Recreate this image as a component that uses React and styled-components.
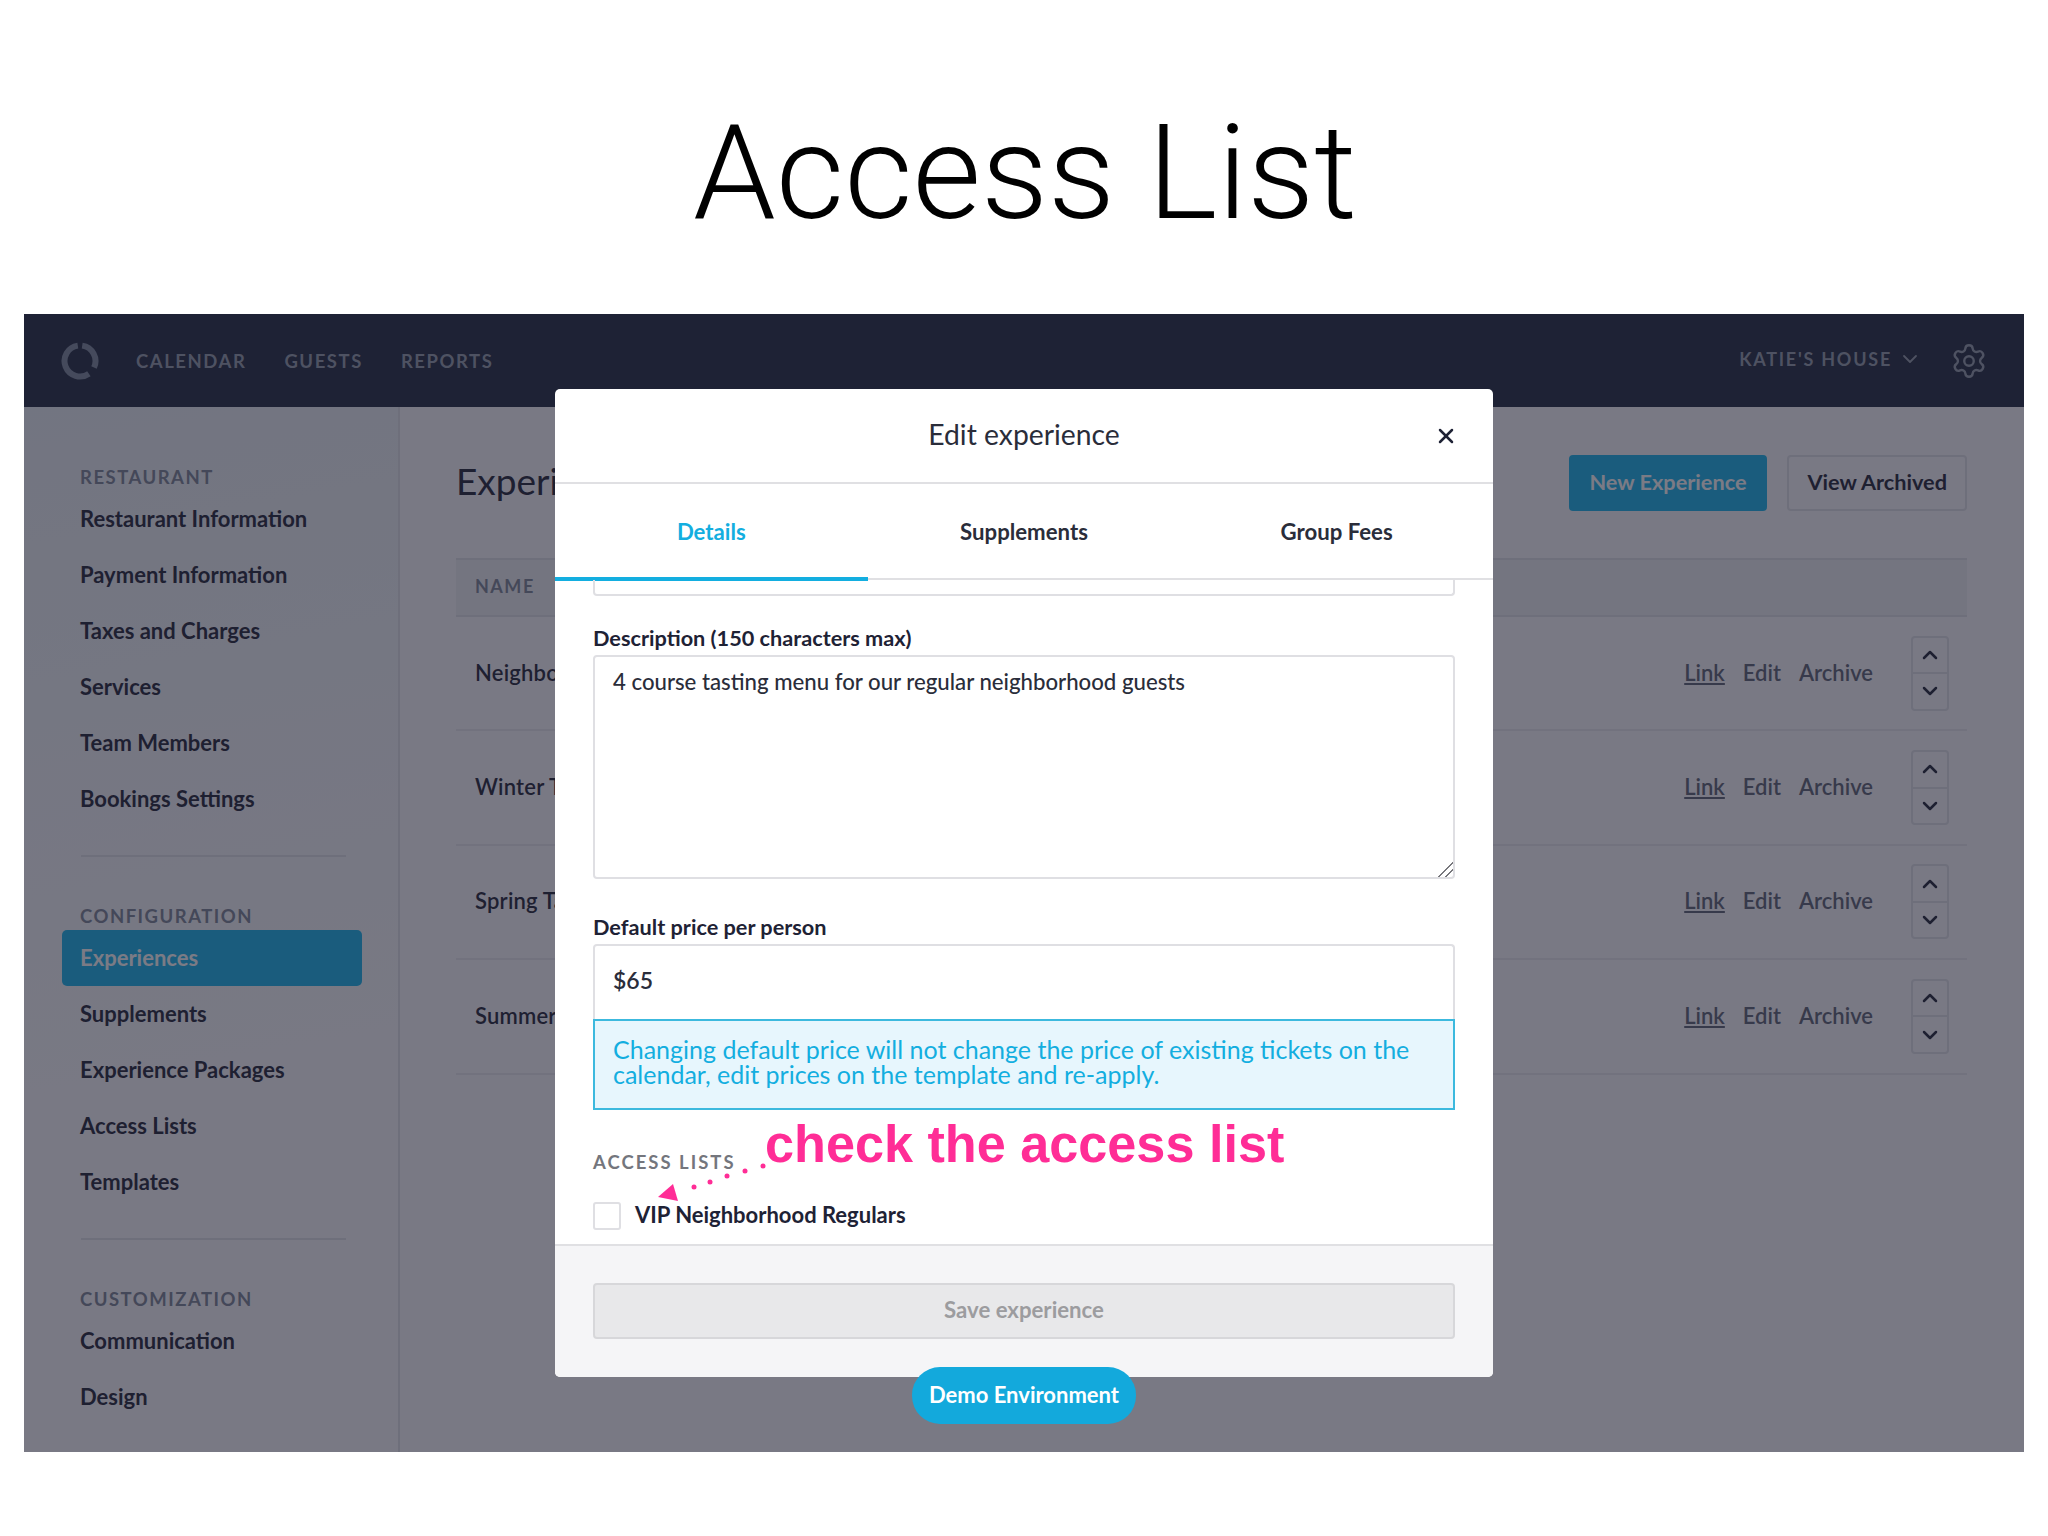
import React from "react";
import styled, { createGlobalStyle } from "styled-components";
import { ChevronDown, ChevronUp, Settings, X } from "lucide-react";

const GlobalStyle = createGlobalStyle`
  html, body {
    margin: 0;
    background: #fff;
  }
  * {
    box-sizing: border-box;
  }
  body {
    font-family: "Lato", "Open Sans", sans-serif;
    color: #1e2235;
  }
`;

const Page = styled.div`
  width: 2048px;
  height: 1536px;
  overflow: hidden;
`;

const SlideTitle = styled.h1`
  margin: 0;
  height: 314px;
  padding: 30px 0 0 2px;
  display: flex;
  align-items: center;
  justify-content: center;
  font-family: "Roboto", "Liberation Sans", sans-serif;
  font-weight: 300;
  font-size: 132.5px;
  color: #000;
`;

const AppFrame = styled.div`
  position: relative;
  margin: 0 24px;
  height: 1138px;
  overflow: hidden;
  background: #fbfbfd;
  display: flex;
  flex-direction: column;
`;

const TopBar = styled.header`
  height: 93px;
  flex: none;
  background: #1e283d;
  display: flex;
  align-items: center;
  padding: 0 36px 0 37px;
  color: #929caa;
`;

const LogoMark = styled.svg`
  flex: none;
  color: #7c889c;
`;

const NavLinks = styled.nav`
  display: flex;
  gap: 38px;
  margin-left: 37px;
  flex: 1;
`;

const NavLink = styled.a`
  font-size: 18.5px;
  font-weight: 700;
  letter-spacing: 1.55px;
`;

const VenuePicker = styled.div`
  display: flex;
  align-items: center;
  gap: 6px;
  font-size: 18px;
  font-weight: 700;
  letter-spacing: 1.75px;
  margin-right: 28px;
  margin-top: -4px;
`;

const Body = styled.div`
  flex: 1;
  display: flex;
  min-height: 0;
`;

const Sidebar = styled.aside`
  width: 376px;
  flex: none;
  padding: 56px 0 0 38px;
  border-right: 2px solid #dfe1e6;
  background: linear-gradient(170deg, #eaf0f4, #fbfbfd 70%);
`;

const SectionLabel = styled.div`
  height: 28px;
  padding-left: 18px;
  line-height: 28px;
  font-size: 18.5px;
  font-weight: 700;
  letter-spacing: 1.5px;
  color: #7b8494;
`;

const SideItem = styled.a`
  display: flex;
  align-items: center;
  width: 300px;
  height: 56px;
  padding: 0 0 2px 18px;
  border-radius: 5px;
  font-size: 22px;
  font-weight: 700;
  color: ${(p) => (p.$active ? "#fff" : "#1e2235")};
  background: ${(p) => (p.$active ? "#14b5eb" : "transparent")};
`;

const SideDivider = styled.hr`
  width: 265px;
  margin: 28px 0 45px 19px;
  border: 0;
  border-top: 2px solid #dfe1e6;
`;

const Main = styled.main`
  flex: 1;
  padding: 48px 57px 0 56px;
`;

const MainHeader = styled.div`
  height: 56px;
  margin-bottom: 47px;
  display: flex;
  align-items: center;
  justify-content: space-between;
`;

const PageHeading = styled.h2`
  margin: 0;
  padding-bottom: 6px;
  font-size: 37px;
  font-weight: 400;
`;

const Actions = styled.div`
  display: flex;
  gap: 20px;
`;

const ActionButton = styled.button`
  height: 56px;
  padding: 0 ${(p) => (p.$primary ? "19px" : "18px")} 3px;
  border-radius: 4px;
  border: 2px solid ${(p) => (p.$primary ? "#14b5eb" : "#dfe1e6")};
  background: ${(p) => (p.$primary ? "#14b5eb" : "transparent")};
  color: ${(p) => (p.$primary ? "#fff" : "#1e2235")};
  font-family: inherit;
  font-size: 21.7px;
  font-weight: 700;
`;

const TableHead = styled.div`
  height: 59px;
  display: flex;
  align-items: center;
  padding: 0 0 3px 19px;
  background: #eff0f3;
  border-top: 2px solid #dfe1e6;
  border-bottom: 2px solid #dfe1e6;
  font-size: 18px;
  font-weight: 700;
  letter-spacing: 1.5px;
  color: #7b8494;
`;

const Row = styled.div`
  height: 114.4px;
  display: flex;
  align-items: center;
  padding: 0 18px 0 19px;
  border-bottom: 2px solid #e9eaee;
  font-size: 22px;
`;

const RowName = styled.div`
  flex: 1;
  padding-bottom: 2px;
  font-weight: 600;
  letter-spacing: 0.2px;
`;

const RowLinks = styled.div`
  display: flex;
  gap: 18px;
  margin-right: 38px;
  padding-bottom: 2px;
  color: #5b6272;
  font-weight: 600;
`;

const RowLink = styled.a`
  text-decoration: ${(p) => (p.$underline ? "underline" : "none")};
`;

const Stepper = styled.div`
  width: 38px;
  height: 75px;
  border: 2px solid #dfe1e6;
  border-radius: 4px;
  display: flex;
  flex-direction: column;
`;

const StepButton = styled.div`
  flex: 1;
  display: flex;
  align-items: center;
  justify-content: center;
  color: #1e2235;
  & + & {
    border-top: 2px solid #dfe1e6;
  }
`;

const Overlay = styled.div`
  position: absolute;
  inset: 0;
  display: flex;
  justify-content: center;
  align-items: flex-start;
  padding-top: 75px;
  background: rgba(30, 30, 47, 0.587);
`;

const Modal = styled.section`
  width: 938px;
  height: 988px;
  background: #fff;
  border-radius: 5px;
  overflow: hidden;
  display: flex;
  flex-direction: column;
`;

const ModalHeader = styled.div`
  position: relative;
  height: 95px;
  flex: none;
  padding-bottom: 4px;
  border-bottom: 2px solid #e0e0e3;
  display: flex;
  align-items: center;
  justify-content: center;
  font-size: 28.3px;
  color: #2a2d3a;
`;

const CloseButton = styled.button`
  position: absolute;
  right: 35px;
  top: 35px;
  padding: 0;
  border: 0;
  background: none;
  display: flex;
  color: #1e2235;
`;

const TabBar = styled.div`
  height: 96px;
  flex: none;
  display: grid;
  grid-template-columns: repeat(3, 1fr);
  box-shadow: inset 0 -2px 0 #e0e0e3;
`;

const Tab = styled.div`
  height: 97px;
  padding-top: 2px;
  display: flex;
  align-items: center;
  justify-content: center;
  border-bottom: 4px solid ${(p) => (p.$active ? "#13aee0" : "transparent")};
  font-size: 22.2px;
  font-weight: 700;
  color: ${(p) => (p.$active ? "#13aee0" : "#2a2d3a")};
`;

const FormScroll = styled.div`
  position: relative;
  flex: 1;
  min-height: 0;
  padding: 0 38px;
  overflow: hidden;
`;

const ClippedField = styled.div`
  height: 16px;
  border: 2px solid #dfdfe3;
  border-top: 0;
  border-radius: 0 0 4px 4px;
`;

const FieldLabel = styled.label`
  display: block;
  height: 28px;
  margin-top: ${(p) => p.$top || 34}px;
  margin-bottom: ${(p) => p.$bottom || 3}px;
  line-height: 28px;
  font-size: 21.7px;
  font-weight: 700;
  color: #1e2235;
`;

const TextArea = styled.textarea`
  display: block;
  width: 100%;
  height: 224px;
  padding: 11px 18px;
  border: 2px solid #dfdfe3;
  border-radius: 4px;
  outline: 0;
  font-family: inherit;
  font-size: 22.2px;
  font-weight: 500;
  line-height: 28px;
  color: #2a2d3a;
  &::-webkit-resizer {
    background: linear-gradient(
      135deg,
      transparent 0 50%,
      #77777c 50% 56%,
      transparent 56% 72%,
      #77777c 72% 78%,
      transparent 78%
    );
  }
`;

const TextInput = styled.input`
  display: block;
  width: 100%;
  height: 75px;
  padding: 0 18px 6px;
  border: 2px solid #dfdfe3;
  border-bottom: 0;
  border-radius: 4px 4px 0 0;
  outline: 0;
  font-family: inherit;
  font-size: 23px;
  font-weight: 600;
  color: #2a2d3a;
`;

const Notice = styled.div`
  height: 91px;
  display: flex;
  align-items: center;
  padding: 0 18px 6px;
  background: #e7f6fd;
  border: 2px solid #3cb9de;
  font-size: 25px;
  line-height: 25px;
  color: #13aee0;
`;

const AccessHeading = styled.div`
  height: 24px;
  margin-top: 40px;
  line-height: 24px;
  font-size: 18.5px;
  font-weight: 700;
  letter-spacing: 2px;
  color: #74767d;
`;

const CheckRow = styled.label`
  display: flex;
  align-items: center;
  gap: 14px;
  margin-top: 28px;
  font-size: 22px;
  font-weight: 700;
  color: #1e2235;
`;

const CheckText = styled.span`
  margin-top: -3px;
`;

const CheckBox = styled.input`
  appearance: none;
  width: 28px;
  height: 28px;
  margin: 0;
  border: 2px solid #dfdfe3;
  border-radius: 3px;
  background: #fff;
`;

const Annotation = styled.div`
  position: absolute;
  left: 210px;
  top: 534px;
  font-family: "Liberation Sans", Arial, sans-serif;
  font-size: 52.2px;
  font-weight: 700;
  line-height: 60px;
  color: #ff2d96;
  white-space: nowrap;
`;

const AnnotationArrow = styled.svg`
  position: absolute;
  left: 95px;
  top: 580px;
`;

const ModalFooter = styled.div`
  height: 133px;
  flex: none;
  padding: 37px 38px;
  background: #f5f5f7;
  border-top: 2px solid #e0e0e3;
`;

const SaveButton = styled.button`
  width: 100%;
  height: 56px;
  padding-bottom: 4px;
  border: 2px solid #d7d7da;
  border-radius: 4px;
  background: #e8e8ea;
  color: #9c9c9f;
  font-family: inherit;
  font-size: 22.2px;
  font-weight: 700;
`;

const DemoPill = styled.div`
  position: absolute;
  left: 50%;
  bottom: 28px;
  transform: translateX(-50%);
  width: 224px;
  height: 57px;
  padding-bottom: 3px;
  display: flex;
  align-items: center;
  justify-content: center;
  border-radius: 28px;
  background: #13a9dc;
  color: #fff;
  font-size: 22px;
  font-weight: 700;
`;

const sections = [
  {
    title: "RESTAURANT",
    items: [
      "Restaurant Information",
      "Payment Information",
      "Taxes and Charges",
      "Services",
      "Team Members",
      "Bookings Settings",
    ],
  },
  {
    title: "CONFIGURATION",
    items: ["Experiences", "Supplements", "Experience Packages", "Access Lists", "Templates"],
  },
  {
    title: "CUSTOMIZATION",
    items: ["Communication", "Design"],
  },
];

const experiences = ["Neighborhood Tasting", "Winter Tasting", "Spring Tasting", "Summer Tasting"];

const Logo = () => (
  <LogoMark width="38" height="38" viewBox="0 0 38 38" fill="none" stroke="currentColor" strokeWidth="6">
    <path d="M16.8 3.65A15.5 15.5 0 1 0 27.9 31.7" />
    <path d="M21.2 3.65A15.5 15.5 0 0 1 33 25.55" />
  </LogoMark>
);

const App = () => {
  return (
    <Page>
      <GlobalStyle />
      <SlideTitle>Access List</SlideTitle>
      <AppFrame>
        <TopBar>
          <Logo />
          <NavLinks>
            <NavLink>CALENDAR</NavLink>
            <NavLink>GUESTS</NavLink>
            <NavLink>REPORTS</NavLink>
          </NavLinks>
          <VenuePicker>
            KATIE'S HOUSE
            <ChevronDown size={24} strokeWidth={1.8} />
          </VenuePicker>
          <Settings size={38} strokeWidth={1.5} />
        </TopBar>
        <Body>
          <Sidebar>
            {sections.map((section, i) => (
              <div key={section.title}>
                <SectionLabel>{section.title}</SectionLabel>
                {section.items.map((item) => (
                  <SideItem key={item} $active={item === "Experiences"}>
                    {item}
                  </SideItem>
                ))}
                {i < sections.length - 1 && <SideDivider />}
              </div>
            ))}
          </Sidebar>
          <Main>
            <MainHeader>
              <PageHeading>Experiences</PageHeading>
              <Actions>
                <ActionButton $primary>New Experience</ActionButton>
                <ActionButton>View Archived</ActionButton>
              </Actions>
            </MainHeader>
            <TableHead>NAME</TableHead>
            {experiences.map((name) => (
              <Row key={name}>
                <RowName>{name}</RowName>
                <RowLinks>
                  <RowLink $underline>Link</RowLink>
                  <RowLink>Edit</RowLink>
                  <RowLink>Archive</RowLink>
                </RowLinks>
                <Stepper>
                  <StepButton>
                    <ChevronUp size={24} strokeWidth={2.5} />
                  </StepButton>
                  <StepButton>
                    <ChevronDown size={24} strokeWidth={2.5} />
                  </StepButton>
                </Stepper>
              </Row>
            ))}
          </Main>
        </Body>
        <Overlay>
          <Modal>
            <ModalHeader>
              Edit experience
              <CloseButton>
                <X size={24} strokeWidth={2.5} />
              </CloseButton>
            </ModalHeader>
            <TabBar>
              <Tab $active>Details</Tab>
              <Tab>Supplements</Tab>
              <Tab>Group Fees</Tab>
            </TabBar>
            <FormScroll>
              <ClippedField />
              <FieldLabel $top={28} $bottom={3}>Description (150 characters max)</FieldLabel>
              <TextArea readOnly value="4 course tasting menu for our regular neighborhood guests" />
              <FieldLabel>Default price per person</FieldLabel>
              <TextInput readOnly value="$65" />
              <Notice>
                <div>
                  Changing default price will not change the price of existing tickets on the calendar, edit prices
                  on the template and re-apply.
                </div>
              </Notice>
              <AccessHeading>ACCESS LISTS</AccessHeading>
              <CheckRow>
                <CheckBox type="checkbox" />
                <CheckText>VIP Neighborhood Regulars</CheckText>
              </CheckRow>
              <Annotation>check the access list</Annotation>
              <AnnotationArrow width="120" height="45" viewBox="0 0 120 45" fill="#ff2d96">
                <circle cx="113" cy="6" r="2.5" />
                <circle cx="95" cy="11" r="2.5" />
                <circle cx="77" cy="16" r="2.5" />
                <circle cx="60" cy="22" r="2.5" />
                <circle cx="44" cy="27" r="2.5" />
                <polygon points="23,24 8,37 28,41" />
              </AnnotationArrow>
            </FormScroll>
            <ModalFooter>
              <SaveButton>Save experience</SaveButton>
            </ModalFooter>
          </Modal>
          <DemoPill>Demo Environment</DemoPill>
        </Overlay>
      </AppFrame>
    </Page>
  );
};

export default App;
